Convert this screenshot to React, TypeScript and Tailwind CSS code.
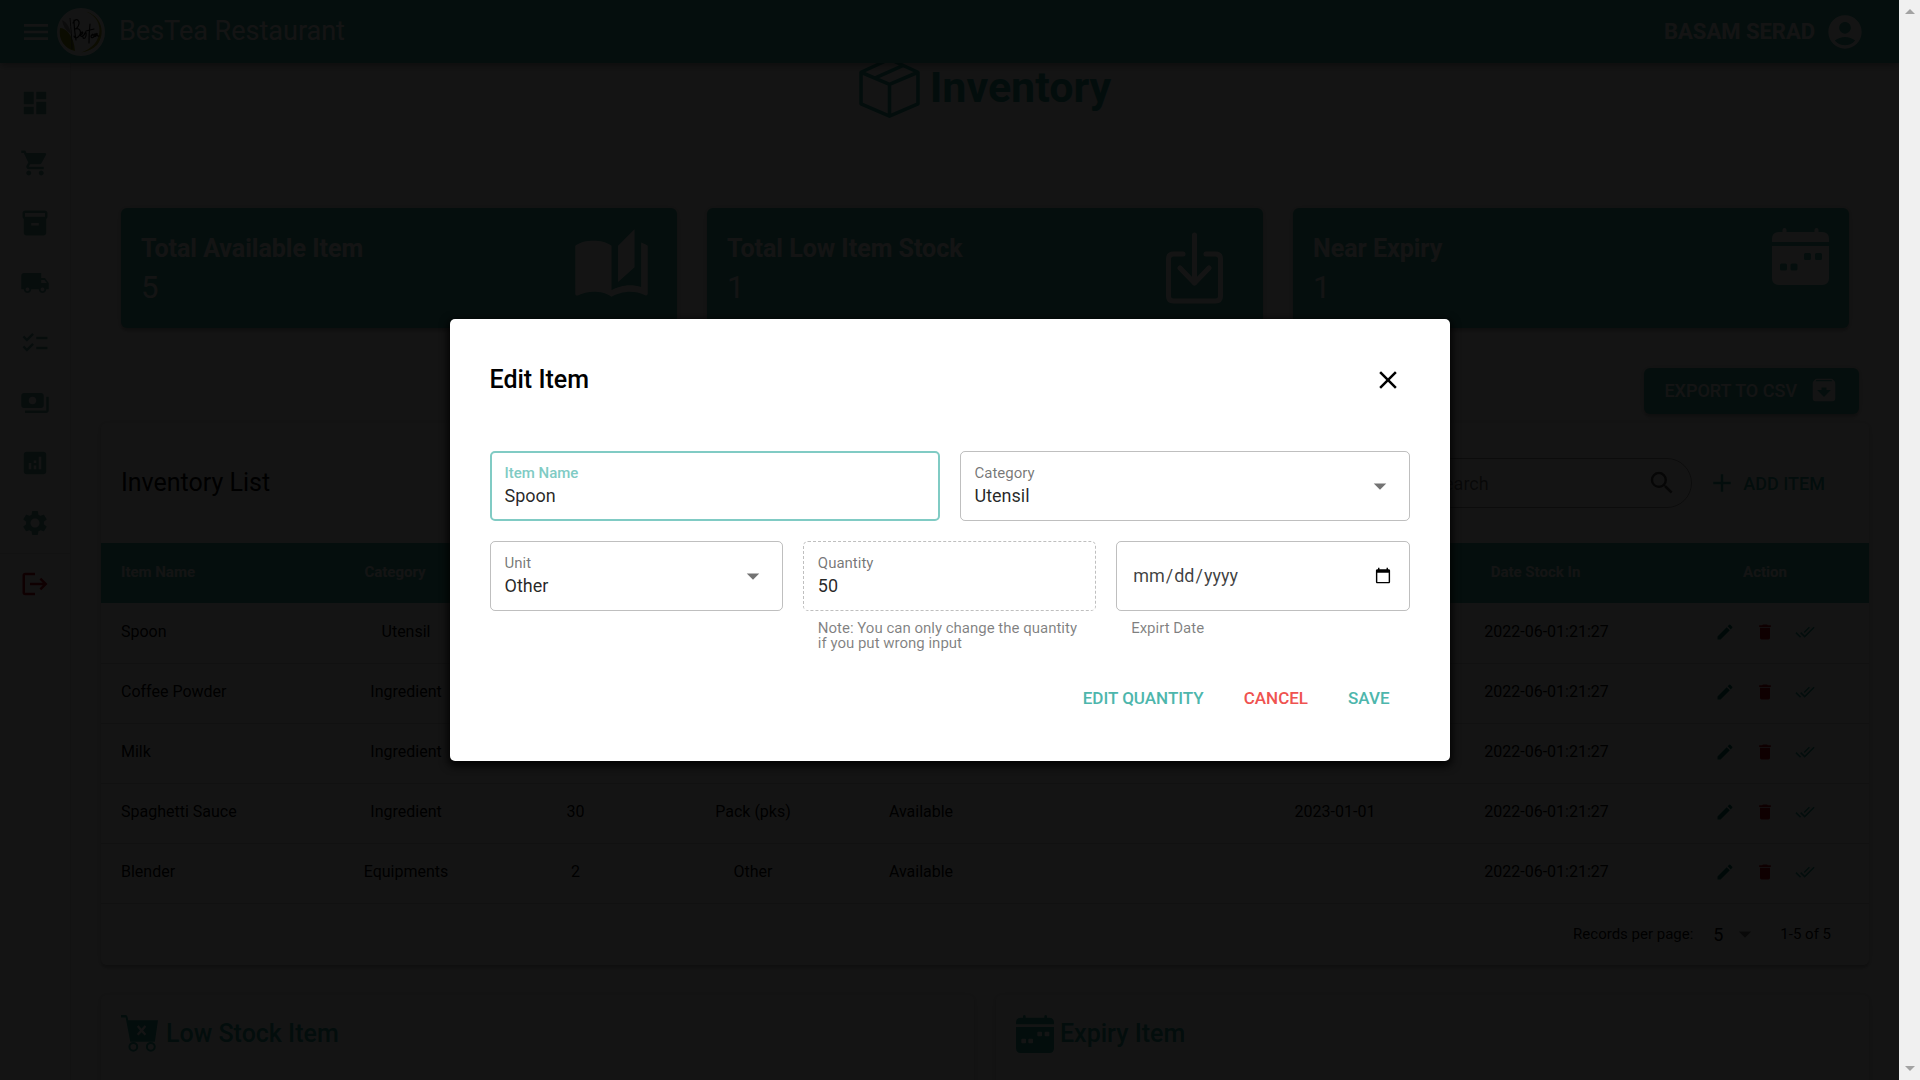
import React from "react";
import {
  MdMenu, MdDashboard, MdShoppingCart, MdInventory2, MdLocalShipping, MdChecklist, MdPayments,
  MdAnalytics, MdSettings, MdLogout, MdAccountCircle, MdAutoStories, MdSearch, MdAdd, MdEdit,
  MdDelete, MdDoneAll, MdArrowDropDown, MdClose, MdArchive,
} from "react-icons/md";

type Item = { name: string; category: string; qty: string; unit: string; status: string; expiry: string; added: string };

const items: Item[] = [
  { name: "Spoon", category: "Utensil", qty: "", unit: "", status: "", expiry: "", added: "2022-06-01:21:27" },
  { name: "Coffee Powder", category: "Ingredient", qty: "", unit: "", status: "", expiry: "", added: "2022-06-01:21:27" },
  { name: "Milk", category: "Ingredient", qty: "", unit: "", status: "", expiry: "", added: "2022-06-01:21:27" },
  { name: "Spaghetti Sauce", category: "Ingredient", qty: "30", unit: "Pack (pks)", status: "Available", expiry: "2023-01-01", added: "2022-06-01:21:27" },
  { name: "Blender", category: "Equipments", qty: "2", unit: "Other", status: "Available", expiry: "", added: "2022-06-01:21:27" },
];

const nav = [
  { label: "Dashboard", Icon: MdDashboard },
  { label: "Orders", Icon: MdShoppingCart },
  { label: "Inventory", Icon: MdInventory2 },
  { label: "Deliveries", Icon: MdLocalShipping },
  { label: "Tasks", Icon: MdChecklist },
  { label: "Payments", Icon: MdPayments },
  { label: "Reports", Icon: MdAnalytics },
  { label: "Settings", Icon: MdSettings },
];

const cardShadow = "shadow-[0_1px_6px_rgba(0,0,0,0.2),0_3px_2px_rgba(0,0,0,0.14)]";

function CalendarIcon({ className }: { className: string }) {
  return (
    <svg viewBox="0 0 57 57" className={className} fill="currentColor" aria-hidden="true">
      <path d="M0 14V11Q0 4 7 4H10.500V2Q10.500 0 12.500 0T14.500 2V4H42.500V2Q42.500 0 44.500 0T46.500 2V4H50Q57 4 57 11V14Z" />
      <path
        fillRule="evenodd"
        d="M0 18H57V50Q57 57 50 57H7Q0 57 0 50ZM33.500 25Q32 25 32 26.500V30.500Q32 32 33.500 32H37.500Q39 32 39 30.500V26.500Q39 25 37.500 25ZM44.500 25Q43 25 43 26.500V30.500Q43 32 44.500 32H48.500Q50 32 50 30.500V26.500Q50 25 48.500 25ZM9.500 35.500Q8 35.500 8 37V41Q8 42.500 9.500 42.500H13.500Q15 42.500 15 41V37Q15 35.500 13.500 35.500ZM20 35.500Q18.500 35.500 18.500 37V41Q18.500 42.500 20 42.500H24Q25.500 42.500 25.500 41V37Q25.500 35.500 24 35.500Z"
      />
    </svg>
  );
}

function DownloadIcon({ className }: { className: string }) {
  return (
    <svg viewBox="0 0 57 72" className={className} fill="none" stroke="currentColor" strokeWidth="5" strokeLinecap="round" strokeLinejoin="round" aria-hidden="true">
      <path d="M17 22H7.500Q2.500 22 2.500 27V64Q2.500 69 7.500 69H49.500Q54.500 69 54.500 64V27Q54.500 22 49.500 22H40M28.500 3V51M14 36L28.500 51L43 36" />
    </svg>
  );
}

function BoxIcon({ className }: { className: string }) {
  return (
    <svg viewBox="0 0 60 60" className={className} fill="none" stroke="currentColor" strokeWidth="3.500" strokeLinejoin="round" aria-hidden="true">
      <path d="M2 15L30 2L58 15V46L30 58.200L2 46ZM2 15L30 27L58 15M30 27V58M15 21L43 8.500" />
    </svg>
  );
}

function CartRemoveIcon({ className }: { className: string }) {
  return (
    <svg viewBox="0 0 36 36" className={className} fill="none" stroke="currentColor" aria-hidden="true">
      <path fill="currentColor" stroke="none" fillRule="evenodd" d="M0 0H4.500Q6 0 6.400 2L7 5H36L33 26H9L4.500 2.500H0ZM15.500 11.500L18.500 15L15.500 18.500L17 20L20 16.800L23 20L24.500 18.500L21.500 15L24.500 11.500L23 10L20 13.300L17 10Z" />
      <circle cx="12" cy="31" r="3.800" strokeWidth="2" />
      <circle cx="29" cy="31" r="3.800" strokeWidth="2" />
    </svg>
  );
}

function Logo() {
  return (
    <svg viewBox="0 0 48 48" className="size-12" aria-hidden="true">
      <circle cx="24" cy="24" r="24" fill="#ffffff" />
      <path d="M29 3.500A21 21 0 0 1 40 37Q34 43 24 44.500Q42 38 42.500 22Q42 9 29 3.500Z" fill="#a3a11a" />
      <path d="M3 20C9 20 17 28 18 43C8 41 1 32 3 20Z" fill="#8f9a14" />
      <path d="M5 12Q12 15 14 26Q6 21 5 12Z" fill="#999999" />
      <path d="M13 10C14 22 15 30 15 41" fill="none" stroke="#444444" strokeWidth="1" />
      <path d="M17 12C17 20 18 26 19 32M16 15C19 8 25 13 20 20Q19 21 18 21C24 19 25 26 21 29C19 31 17 29 17 28M23 27C27 26 26 22 24 25C22 29 26 30 28 25C29 22 30 28 28 30Q26 31 26 29M33 16C32 24 32 30 32 35M29 23L37 21M34 28C37 26 36 25 34 28C34 31 37 30 39 26C36 25 36 30 39 28L40 25Q40 29 42 28" fill="none" stroke="#111111" strokeWidth="1.200" strokeLinecap="round" />
    </svg>
  );
}

function StatCard({ title, value, children }: { title: string; value: string; children: React.ReactNode }) {
  return (
    <section className={`flex h-[120px] justify-between rounded-md bg-[#3fae9f] px-5 text-white ${cardShadow}`}>
      <div className="pt-[25px]">
        <h2 className="text-[25px] leading-8 font-bold">{title}</h2>
        <p className="mt-1 text-[31px] leading-[38px]">{value}</p>
      </div>
      {children}
    </section>
  );
}

function Page() {
  return (
    <div className="flex h-full flex-col bg-[#fafafa]">
      <header className="z-10 flex h-[63px] shrink-0 items-center bg-[#3fae9f] pr-[34px] pl-5 text-white shadow-[0_2px_8px_rgba(0,0,0,0.4)]">
        <button aria-label="Menu" className="mr-[5px]"><MdMenu className="size-8" /></button>
        <Logo />
        <h1 className="ml-[14px] text-[27px] font-normal">BesTea Restaurant</h1>
        <button className="ml-auto flex items-center gap-[10px] text-[22px] font-bold">
          BASAM SERAD
          <MdAccountCircle className="size-10" />
        </button>
      </header>
      <div className="flex min-h-0 flex-1">
        <nav className="w-[71px] shrink-0 border-r border-black/10 bg-white pt-[10px] text-[#5fa39e]">
          {nav.map(({ label, Icon }) => (
            <a key={label} href="#" aria-label={label} className="flex h-[60px] items-center justify-center">
              <Icon className="size-[30px]" />
            </a>
          ))}
          <a href="#" aria-label="Log out" className="flex h-[60px] items-center justify-center border-t border-black/10 text-[#c10015]">
            <MdLogout className="size-[30px]" />
          </a>
        </nav>
        <main className="min-w-0 flex-1 px-[30px]">
          <div className="flex h-12 items-center justify-center gap-[10px] text-[#26a69a]">
            <BoxIcon className="size-[61px]" />
            <h2 className="text-[43px] leading-[50px] font-bold">Inventory</h2>
          </div>
          <div className="mx-5 mt-[97px] grid grid-cols-3 gap-[30px]">
            <StatCard title="Total Available Item" value="5">
              <MdAutoStories className="mt-[18px] mr-[6px] size-[79px]" />
            </StatCard>
            <StatCard title="Total Low Item Stock" value="1">
              <DownloadIcon className="mt-6 mr-5 h-[72px] w-[57px]" />
            </StatCard>
            <StatCard title="Near Expiry" value="1">
              <CalendarIcon className="mt-5 size-[57px]" />
            </StatCard>
          </div>
          <div className="mt-10 flex justify-end pr-[10px]">
            <button className={`flex h-[46px] items-center gap-3 rounded-md bg-[#3fae9f] px-5 pb-[2px] text-[18px] font-medium text-white ${cardShadow}`}>
              EXPORT TO CSV
              <MdArchive className="size-[30px]" />
            </button>
          </div>
          <section className={`mt-[9px] rounded-md bg-white ${cardShadow}`}>
            <div className="flex h-[120px] items-center px-5">
              <h2 className="mr-auto text-[25px]">Inventory List</h2>
              <div className="flex h-[50px] w-[278px] items-center rounded-full border border-black/40 px-[14px]">
                <input aria-label="Search" placeholder="Search" className="min-w-0 flex-1 pl-1 text-[18px] outline-none placeholder:text-black/60" />
                <MdSearch className="size-[30px] text-black/70" />
              </div>
              <button className="mr-6 ml-[15px] flex items-center gap-[6px] text-[18px] font-medium text-[#26a69a]">
                <MdAdd className="size-[30px]" />
                ADD ITEM
              </button>
            </div>
            <table className="w-full table-fixed text-center text-[16px] [&_td]:pb-[2px] [&_th]:pb-[2px]">
              <colgroup>
                <col className="w-[226px]" />
                <col className="w-[158px]" />
                <col className="w-[181px]" />
                <col className="w-[174px]" />
                <col className="w-[162px]" />
                <col className="w-[236px]" />
                <col className="w-[194px]" />
                <col className="w-[229px]" />
                <col className="w-[208px]" />
              </colgroup>
              <thead>
                <tr className="h-[60px] bg-[#3fae9f] text-[15px] text-white">
                  <th className="pl-5 text-left font-bold">Item Name</th>
                  <th className="pr-[22px] font-bold">Category</th>
                  <th />
                  <th />
                  <th />
                  <th />
                  <th />
                  <th className="pr-[22px] font-bold">Date Stock In</th>
                  <th className="font-bold">Action</th>
                </tr>
              </thead>
              <tbody>
                {items.map((item) => (
                  <tr key={item.name} className="h-[60px] border-b border-black/15">
                    <td className="pl-5 text-left">{item.name}</td>
                    <td>{item.category}</td>
                    <td>{item.qty}</td>
                    <td>{item.unit}</td>
                    <td>{item.status}</td>
                    <td />
                    <td>{item.expiry}</td>
                    <td>{item.added}</td>
                    <td>
                      <div className="flex justify-center gap-5">
                        <button aria-label="Edit" className="text-[#00796b]"><MdEdit className="size-5" /></button>
                        <button aria-label="Delete" className="text-[#c10015]"><MdDelete className="size-5" /></button>
                        <button aria-label="Mark done" className="text-[#26a69a]"><MdDoneAll className="size-5" /></button>
                      </div>
                    </td>
                  </tr>
                ))}
              </tbody>
            </table>
            <div className="flex h-[61px] items-center justify-end pr-[38px] text-[15px]">
              <label htmlFor="per-page">Records per page:</label>
              <div className="relative ml-5 flex items-center">
                <select id="per-page" className="w-[47px] appearance-none text-[18px]"><option>5</option></select>
                <MdArrowDropDown className="pointer-events-none absolute right-0 size-[30px] text-black/55" />
              </div>
              <span className="ml-5">1-5 of 5</span>
            </div>
          </section>
          <div className="mt-[30px] grid grid-cols-2 gap-[22px]">
            <section className={`h-[300px] rounded-md bg-white ${cardShadow}`}>
              <h2 className="flex items-center gap-2 px-5 pt-5 text-[25px] font-medium text-[#26a69a]">
                <CartRemoveIcon className="size-[37px]" />
                Low Stock Item
              </h2>
            </section>
            <section className={`h-[300px] rounded-md bg-white ${cardShadow}`}>
              <h2 className="flex items-center gap-[6px] px-5 pt-5 text-[25px] font-medium text-[#26a69a]">
                <CalendarIcon className="size-[38px]" />
                Expiry Item
              </h2>
            </section>
          </div>
        </main>
      </div>
    </div>
  );
}

const labelText = "text-[15px] leading-[18px]";
const control = "mt-[2px] w-full bg-transparent text-[18px] leading-6 text-black/85 outline-none appearance-none";

function SelectField({ id, label, value }: { id: string; label: string; value: string }) {
  return (
    <div className="flex h-[70px] items-center rounded-[5px] border border-black/25 px-[14px]">
      <div className="min-w-0 flex-1">
        <label htmlFor={id} className={`block text-black/55 ${labelText}`}>{label}</label>
        <select id={id} className={control}><option>{value}</option></select>
      </div>
      <MdArrowDropDown className="size-[30px] text-black/55" />
    </div>
  );
}

function EditItemDialog() {
  return (
    <div role="dialog" aria-labelledby="dialog-title" className="w-[1000px] rounded-[5px] bg-white p-10 shadow-[0_3px_8px_2px_rgba(0,0,0,0.9)]">
      <div className="flex h-[42px] items-center justify-between">
        <h2 id="dialog-title" className="text-[25px] font-medium">Edit Item</h2>
        <button aria-label="Close" className="mr-[7px]"><MdClose className="size-[30px]" /></button>
      </div>
      <div className="mt-[50px] grid grid-cols-2 gap-5">
        <div className="flex h-[70px] flex-col justify-center rounded-[5px] border-2 border-[#80cbc4] px-[13px]">
          <label htmlFor="item-name" className={`font-medium text-[#80cbc4] ${labelText}`}>Item Name</label>
          <input id="item-name" defaultValue="Spoon" className={control} />
        </div>
        <SelectField id="category" label="Category" value="Utensil" />
      </div>
      <div className="mt-5 grid grid-cols-3 gap-5">
        <SelectField id="unit" label="Unit" value="Other" />
        <div>
          <div className="flex h-[70px] flex-col justify-center rounded-[5px] border border-dashed border-black/25 px-[14px]">
            <label htmlFor="quantity" className={`text-black/55 ${labelText}`}>Quantity</label>
            <input id="quantity" readOnly defaultValue="50" className={control} />
          </div>
          <p className="mt-[10px] px-[15px] text-[15px] leading-[15px] text-black/50">Note: You can only change the quantity if you put wrong input</p>
        </div>
        <div>
          <div className="flex h-[70px] items-center rounded-[5px] border border-black/25 px-[15px]">
            <input id="expiry" type="date" className="w-full text-[18px] leading-6 text-black/75 outline-none" />
          </div>
          <label htmlFor="expiry" className="mt-[10px] block px-[15px] text-[15px] leading-[15px] text-black/50">Expirt Date</label>
        </div>
      </div>
      <div className="mt-[25px] flex justify-end text-[17px] font-medium">
        <button className="h-[45px] px-5 text-[#4db6ac]">EDIT QUANTITY</button>
        <button className="h-[45px] px-5 text-[#ef5350]">CANCEL</button>
        <button className="h-[45px] px-5 text-[#4db6ac]">SAVE</button>
      </div>
    </div>
  );
}

export default function App() {
  return (
    <div className="flex h-screen overflow-hidden font-[Roboto,sans-serif] text-black">
      <div className="relative min-w-0 flex-1 overflow-hidden">
        <Page />
        <div className="absolute inset-0 z-20 flex items-center justify-center bg-black/92">
          <EditItemDialog />
        </div>
      </div>
      <div className="flex w-[21px] shrink-0 flex-col items-center justify-between bg-[#f0f0f0] py-[9px]" aria-hidden="true">
        <span className="border-x-5 border-b-5 border-x-transparent border-b-[#a3a3a3]" />
        <span className="border-x-5 border-t-5 border-x-transparent border-t-[#a3a3a3]" />
      </div>
    </div>
  );
}
